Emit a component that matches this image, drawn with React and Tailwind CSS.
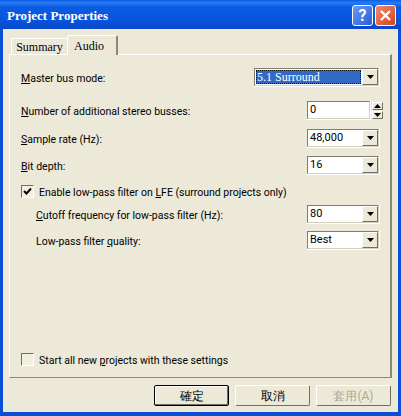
const SANS = { fontFamily: 'Roboto, "Liberation Sans", Arial, sans-serif' }
const SERIF = { fontFamily: '"Liberation Serif", "Times New Roman", serif' }

function Arrow({ up }) {
  return (
    <svg width="7" height="4" viewBox="0 0 7 4" className="block">
      <path d={up ? 'M3.5 0 L7 4 L0 4 Z' : 'M0 0 L7 0 L3.5 4 Z'} fill="#000" />
    </svg>
  )
}

function Sunken({ className, children }) {
  return (
    <div className={`border border-t-[#ece9d8] border-l-[#ece9d8] border-r-white border-b-white ${className}`}>
      <div className="h-full border border-[#7f7d70] border-r-[#d4d0c0] border-b-[#d4d0c0] bg-white flex items-stretch">
        {children}
      </div>
    </div>
  )
}

function Combo({ value, width = 'w-[74px]', selected = false }) {
  return (
    <Sunken className={`${width} h-[20px] shrink-0`}>
      {selected ? (
        <div
          className="flex-1 min-w-0 flex items-center text-[12px] pl-[1px] m-[1px] bg-[#316ac5] text-white outline-1 outline-dotted outline-[#111] -outline-offset-1"
          style={SERIF}
        >
          {value}
        </div>
      ) : (
        <div className="flex-1 min-w-0 flex items-center text-[11px] pl-[2px] text-black">{value}</div>
      )}
      <div className="w-[16px] flex items-center justify-center bg-[#ece9d8] border border-t-white border-l-white border-r-[#716f64] border-b-[#716f64]">
        <Arrow />
      </div>
    </Sunken>
  )
}

function Checkbox({ checked }) {
  return (
    <div className="w-[13px] h-[13px] shrink-0 border border-t-[#716f64] border-l-[#716f64] border-r-white border-b-white bg-[#f1efe2] flex items-center justify-center">
      {checked && (
        <svg width="9" height="9" viewBox="0 0 9 9">
          <path d="M1 4 L3.5 6.5 L8 1.5" fill="none" stroke="#000" strokeWidth="2" />
        </svg>
      )}
    </div>
  )
}

function Row({ u, rest, before = '', indent = false, className, children }) {
  return (
    <div className={`flex items-center justify-between ${indent ? 'pl-[15px]' : ''} ${className}`}>
      <span className="text-[10.5px] pt-[3px] text-black whitespace-nowrap">
        {before}<u>{u}</u>{rest}
      </span>
      {children}
    </div>
  )
}

function DlgButton({ children, primary, disabled }) {
  return (
    <div className={`w-[75px] h-[21px] rounded-[2px] flex items-center justify-center text-[12px] border ${primary ? 'border-black shadow-[inset_-1px_-1px_0_#716f64,inset_1px_1px_0_#fff]' : 'border-t-white border-l-white border-r-[#716f64] border-b-[#716f64]'} ${disabled ? 'text-[#aca899]' : 'text-black'}`}>
      {children}
    </div>
  )
}

export default function App() {
  return (
    <div className="w-[401px] h-[416px] flex flex-col overflow-hidden bg-[#0a4fd8]" style={SANS}>
      <div className="h-[29px] shrink-0 flex items-center justify-between pl-[7px] pr-[5px] pt-[2px] bg-[linear-gradient(180deg,#0a5fe8_0%,#2a7af2_10%,#0a5be3_25%,#0855dd_70%,#0a45c8_100%)]">
        <span className="text-white font-bold text-[13px]" style={SERIF}>Project Properties</span>
        <div className="flex gap-[2px]">
          <div className="w-[21px] h-[21px] rounded-[3px] border border-white bg-gradient-to-br from-[#6a9bf4] to-[#2a5cd8] flex items-center justify-center text-white font-bold text-[16px]">?</div>
          <div className="w-[21px] h-[21px] rounded-[3px] border border-white bg-gradient-to-br from-[#eb8a6c] to-[#d4411c] flex items-center justify-center">
            <svg width="13" height="13" viewBox="0 0 13 13">
              <path d="M2 2 L11 11 M11 2 L2 11" stroke="#fff" strokeWidth="2.4" />
            </svg>
          </div>
        </div>
      </div>

      <div className="flex-1 mx-[3px] mb-[4px] bg-[#ece9d8] flex flex-col px-[6px] pt-[6px] text-black">
        <div className="flex items-end h-[20px] pl-[2px] relative z-10 -mb-[1px]">
          <div className="w-[56px] h-[17px] border border-white border-b-0 border-r-0 rounded-t-[2px] flex items-center justify-center text-[12px]" style={SERIF}>Summary</div>
          <div className="w-[51px] h-[20px] bg-[#ece9d8] border border-white border-b-0 border-r-[#8a8878] border-r-2 rounded-t-[2px] flex items-start pl-[6px] pt-[1px] text-[12px]" style={SERIF}>Audio</div>
        </div>

        <div className="h-[324px] border border-white border-r-[#8a8878] border-b-[#8a8878] border-r-2 flex flex-col pl-[11px] pr-[10px]">
          <Row u="M" rest="aster bus mode:" className="mt-[12px]">
            <Combo value="5.1 Surround" width="w-[127px]" selected />
          </Row>
          <Row u="N" rest="umber of additional stereo busses:" className="mt-[13px]">
            <div className="flex items-center gap-[1px] -mr-[3px]">
              <Sunken className="w-[65px] h-[20px]">
                <div className="flex-1 flex items-center pl-[2px] text-[11px]">0</div>
              </Sunken>
              <div className="w-[11px] flex flex-col gap-[1px]">
                <div className="h-[8px] flex items-center justify-center border border-t-white border-l-white border-r-[#716f64] border-b-[#716f64]"><Arrow up /></div>
                <div className="h-[8px] flex items-center justify-center border border-t-white border-l-white border-r-[#716f64] border-b-[#716f64]"><Arrow /></div>
              </div>
            </div>
          </Row>
          <Row u="S" rest="ample rate (Hz):" className="mt-[8px]">
            <Combo value="48,000" />
          </Row>
          <Row u="B" rest="it depth:" className="mt-[7px]">
            <Combo value="16" />
          </Row>
          <div className="flex items-center gap-[5px] mt-[10px] h-[13px] text-[10.5px]">
            <Checkbox checked />
            <span className="pt-[3px]">Enable low-pass filter on <u>L</u>FE (surround projects only)</span>
          </div>
          <Row u="C" rest="utoff frequency for low-pass filter (Hz):" indent className="mt-[6px]">
            <Combo value="80" />
          </Row>
          <Row before="Low-pass filter " u="q" rest="uality:" indent className="mt-[6px]">
            <Combo value="Best" />
          </Row>
          <div className="flex items-center gap-[5px] mt-[103px] h-[13px] text-[10.5px]">
            <Checkbox />
            <span className="pt-[3px]">Start all new <u>p</u>rojects with these settings</span>
          </div>
        </div>

        <div className="flex justify-end gap-[6px] mt-[7px] pr-[1px]">
          <DlgButton primary>確定</DlgButton>
          <DlgButton>取消</DlgButton>
          <DlgButton disabled>套用(A)</DlgButton>
        </div>
      </div>
    </div>
  )
}
